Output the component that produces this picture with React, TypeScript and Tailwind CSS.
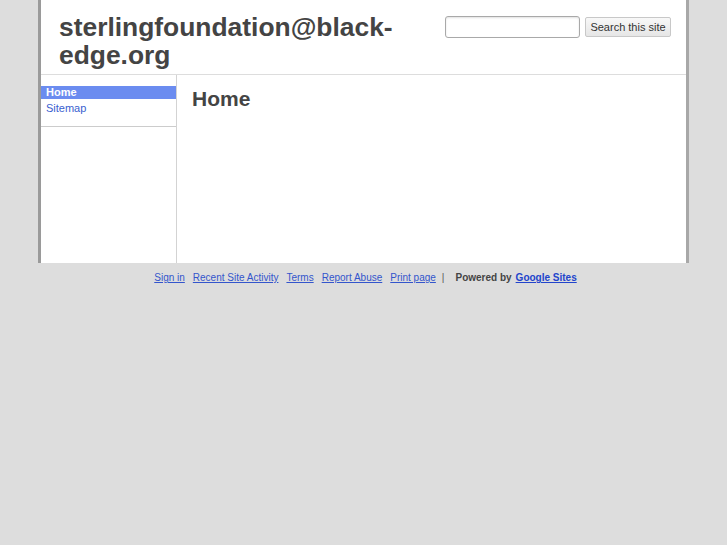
import React from "react";

export default function App() {
  const font = { fontFamily: '"Liberation Sans", Arial, sans-serif' };
  return (
    <div className="min-h-screen w-full bg-[#dddddd]" style={font}>
      <div className="ml-[38px] w-[651px] border-x-[3px] border-l-[#9a9a9a] border-r-[#a8a8a8] bg-white">
        {/* Header */}
        <div className="flex justify-between border-b border-[#dddddd] h-[75px]">
          <h1 className="pl-[18px] pt-[13px] w-[380px] text-[26.4px] leading-[28px] font-bold text-[#444444]">
            sterlingfoundation@black-edge.org
          </h1>
          <div className="flex items-start gap-[5px] pt-[16px] pr-[15px]">
            <input
              type="text"
              className="w-[135px] h-[22px] border border-[#a9a9a9] rounded-[3px] bg-white shadow-[inset_0_1px_2px_rgba(0,0,0,0.12)]"
            />
            <button className="mt-[1px] h-[20px] w-[86px] border border-[#c8c8c8] rounded-[2px] bg-gradient-to-b from-[#f8f8f8] to-[#e6e6e6] text-[11px] leading-[18px] text-[#333333]">
              Search this site
            </button>
          </div>
        </div>
        {/* Body */}
        <div className="flex h-[188px]">
          <div className="w-[136px] border-r border-[#d3d3d3]">
            <div className="pt-[11px] pb-[11px] border-b border-[#cccccc]">
              <div className="h-[13px] mb-[3px] bg-[#6b8cf0] pl-[5px] text-[11px] leading-[13px] font-bold text-white">
                Home
              </div>
              <div className="h-[13px] pl-[5px] text-[11px] leading-[13px] text-[#3a5fd0]">
                Sitemap
              </div>
            </div>
          </div>
          <div className="flex-1 pl-[15px] pt-[12px]">
            <h2 className="text-[21px] leading-[24px] font-bold text-[#444444]">Home</h2>
          </div>
        </div>
      </div>
      {/* Footer */}
      <div className="flex justify-center pt-[9px] text-[10px] leading-[12px] ml-[4px]">
        <a className="underline text-[#3355cc] mr-[8px]">Sign in</a>
        <a className="underline text-[#3355cc] mr-[8px]">Recent Site Activity</a>
        <a className="underline text-[#3355cc] mr-[8px]">Terms</a>
        <a className="underline text-[#3355cc] mr-[8px]">Report Abuse</a>
        <a className="underline text-[#3355cc] mr-[6px]">Print page</a>
        <span className="text-[#555555] mr-[11px]">|</span>
        <span className="font-bold text-[#444444] mr-[4px]">Powered by</span>
        <a className="underline font-bold text-[#2244cc]">Google Sites</a>
      </div>
    </div>
  );
}
